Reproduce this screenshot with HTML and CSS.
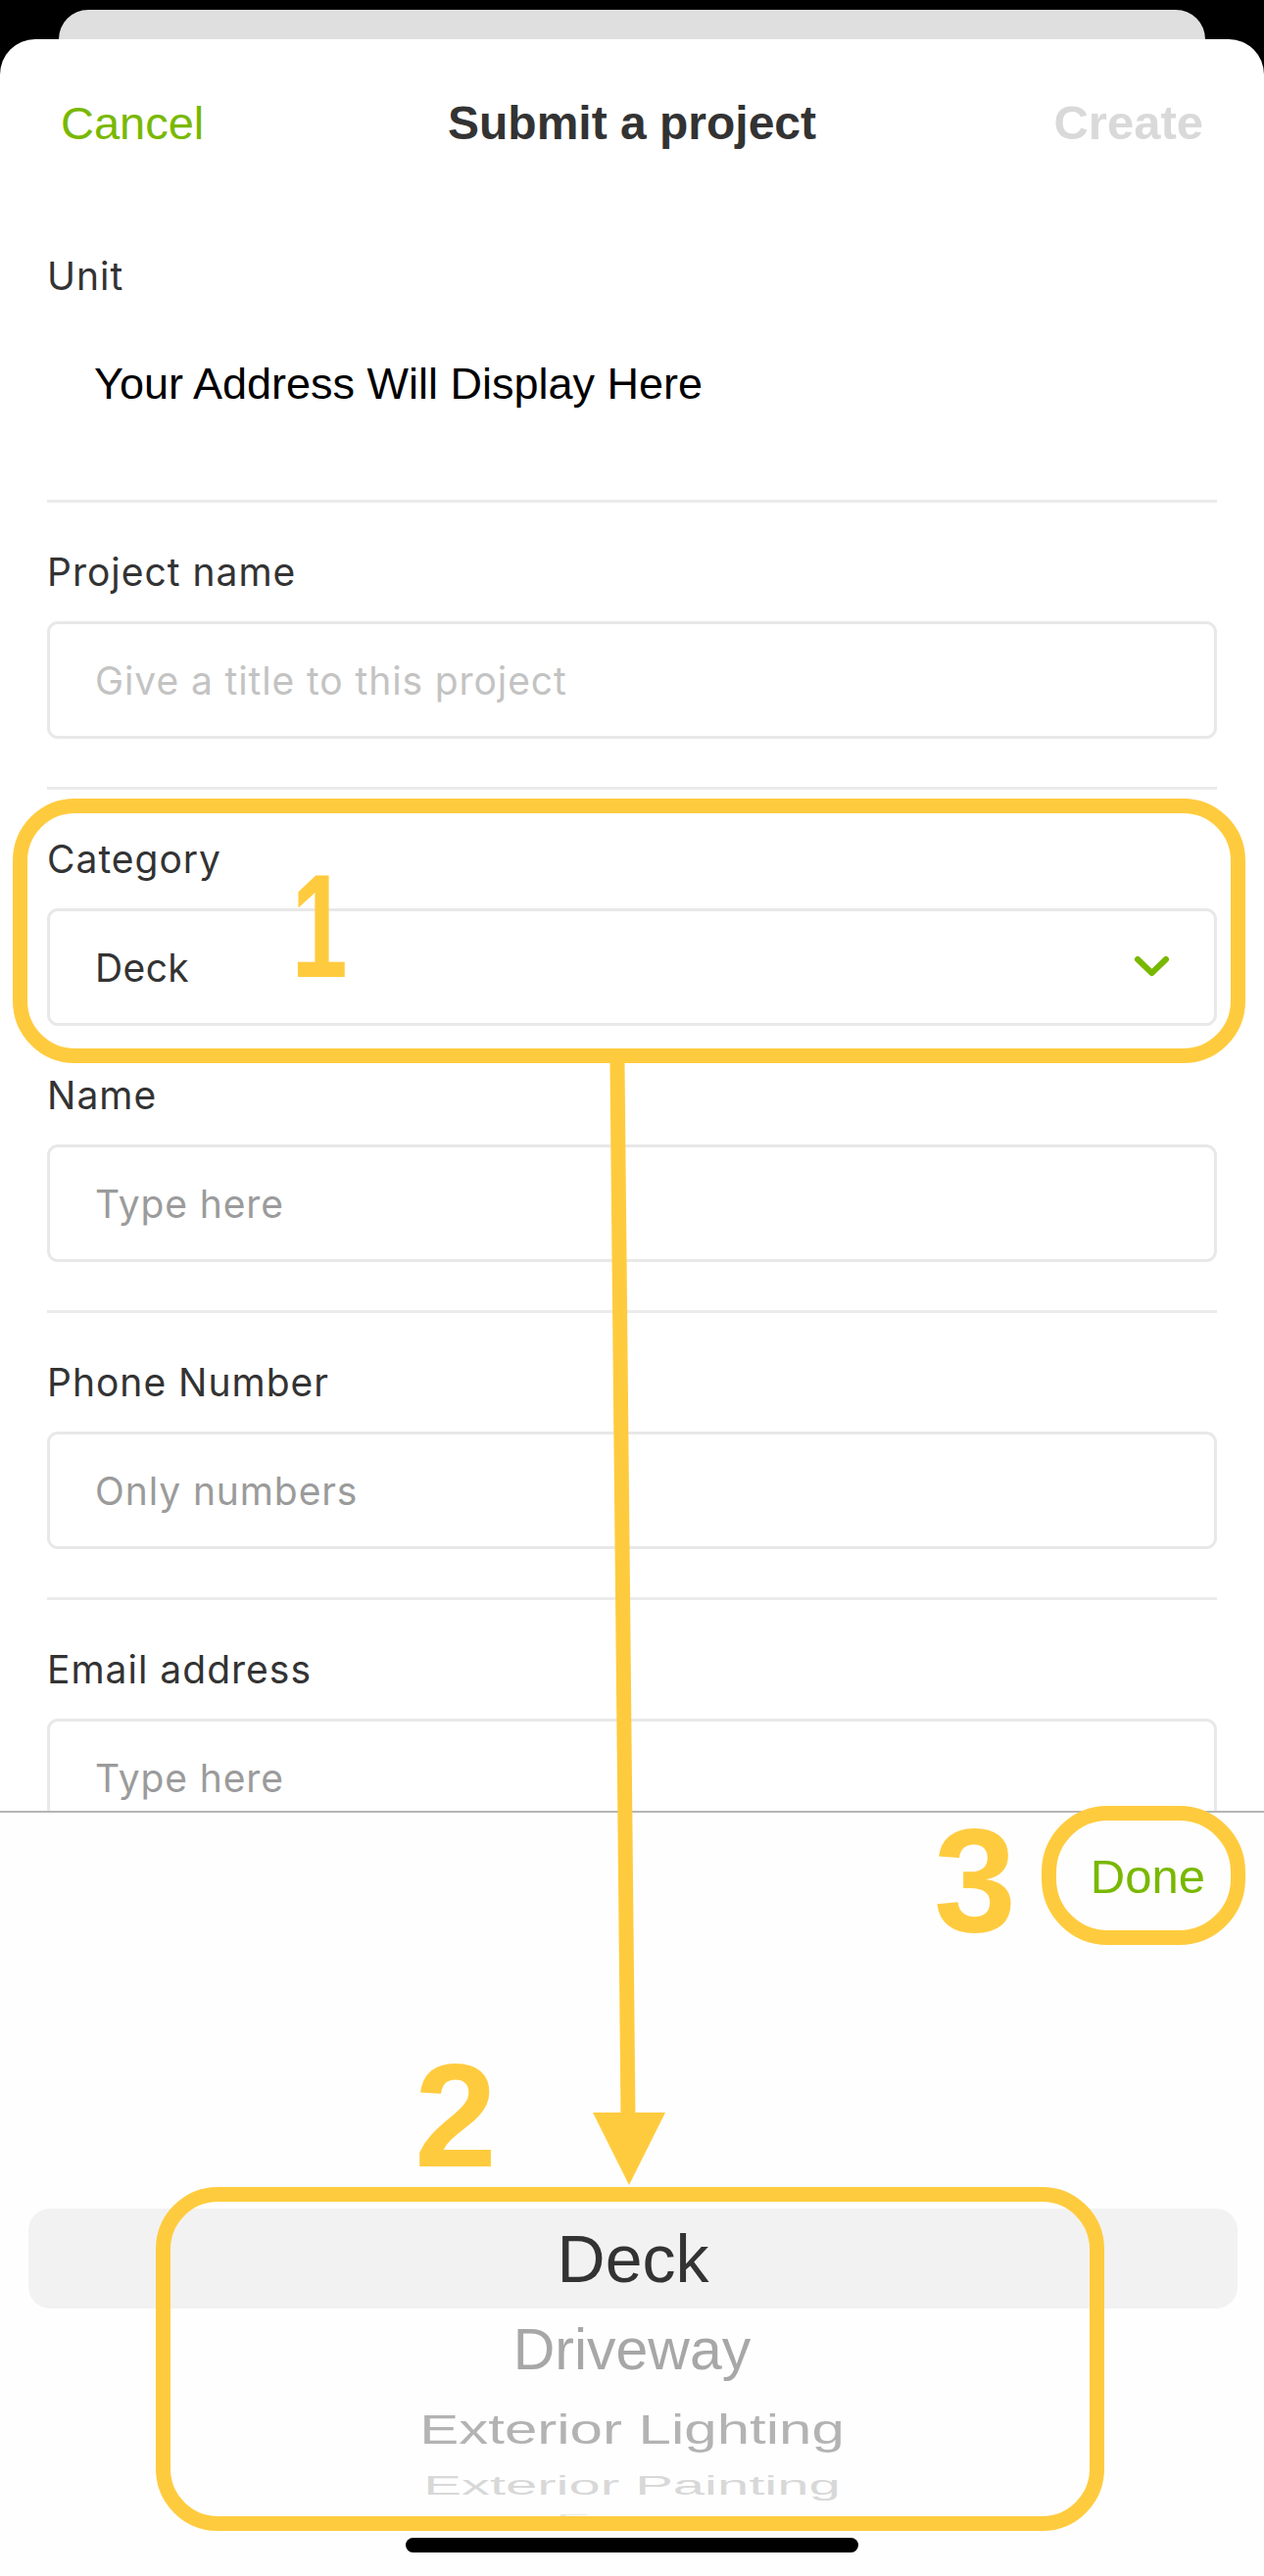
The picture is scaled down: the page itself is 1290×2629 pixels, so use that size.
FILE: index.html
```html
<!DOCTYPE html>
<html lang="en">
<head>
<meta charset="utf-8">
<title>Submit a project</title>
<link rel="stylesheet" href="styles.css">
</head>
<body>
<div class="device">
  <div class="backcard"></div>
  <div class="sheet">
    <header class="nav">
      <span class="nav-cancel">Cancel</span>
      <span class="nav-title">Submit a project</span>
      <span class="nav-create">Create</span>
    </header>

    <main class="form">
      <section class="field field-unit">
        <div class="label">Unit</div>
        <div class="address">Your Address Will Display Here</div>
      </section>
      <hr class="divider">

      <section class="field">
        <div class="label">Project name</div>
        <div class="input"><span class="ph ph-light">Give a title to this project</span></div>
      </section>
      <hr class="divider">

      <section class="field field-open">
        <div class="label">Category</div>
        <div class="input select">
          <span class="value">Deck</span>
          <svg class="chev" width="42" height="28" viewBox="0 0 42 28" aria-hidden="true">
            <polyline points="6,6 20.5,20 35,6" fill="none" stroke="#79b800" stroke-width="6" stroke-linecap="round" stroke-linejoin="round"/>
          </svg>
        </div>
      </section>

      <section class="field">
        <div class="label">Name</div>
        <div class="input"><span class="ph">Type here</span></div>
      </section>
      <hr class="divider">

      <section class="field">
        <div class="label">Phone Number</div>
        <div class="input"><span class="ph">Only numbers</span></div>
      </section>
      <hr class="divider">

      <section class="field">
        <div class="label">Email address</div>
        <div class="input"><span class="ph">Type here</span></div>
      </section>
    </main>

    <div class="picker">
      <div class="toolbar"><span class="done">Done</span></div>
      <div class="wheel">
        <div class="row row-sel"><span>Deck</span></div>
        <div class="row row-1"><span>Driveway</span></div>
        <div class="row row-2"><span>Exterior Lighting</span></div>
        <div class="row row-3"><span>Exterior Painting</span></div>
        <div class="row row-4"><span>Fence</span></div>
      </div>
      <div class="home"></div>
    </div>
  </div>

  <svg class="annot" width="1290" height="2629" viewBox="0 0 1290 2629" aria-hidden="true">
    <rect x="20.5" y="822.5" width="1243" height="255" rx="56" ry="56" fill="none" stroke="#ffcb3e" stroke-width="15"/>
    <rect x="1070.5" y="1850.5" width="193" height="127" rx="60" ry="60" fill="none" stroke="#ffcb3e" stroke-width="15"/>
    <rect x="166.5" y="2239.5" width="953" height="336" rx="56" ry="56" fill="none" stroke="#ffcb3e" stroke-width="15"/>
    <line x1="630" y1="1085" x2="641" y2="2160" stroke="#ffcb3e" stroke-width="15"/>
    <polygon points="605,2156 679,2156 642,2230" fill="#ffcb3e"/>
  </svg>
  <div class="step step-1">1</div>
  <div class="step step-2">2</div>
  <div class="step step-3">3</div>
</div>
</body>
</html>
```

FILE: styles.css
```css
* { box-sizing: border-box; }

html, body {
  margin: 0;
  padding: 0;
  background: #000;
}

.device {
  position: relative;
  width: 1290px;
  height: 2629px;
  overflow: hidden;
  background: #000;
  display: flex;
  flex-direction: column;
}

.backcard {
  flex: none;
  height: 60px;
  margin: 10px 60px -30px;
  background: #dfdfdf;
  border-radius: 30px 30px 0 0;
}

.sheet {
  position: relative;
  flex: 1;
  min-height: 0;
  background: #fff;
  border-radius: 36px 36px 0 0;
  display: flex;
  flex-direction: column;
}

/* ---------- nav ---------- */
.nav {
  flex: none;
  height: 170px;
  padding: 0 62px;
  display: grid;
  grid-template-columns: 1fr auto 1fr;
  align-items: center;
  font-family: "Liberation Sans", Arial, sans-serif;
  font-size: 47px;
}
.nav-cancel { color: #79b800; justify-self: start; }
.nav-title { color: #333; font-weight: bold; font-size: 48px; }
.nav-create { color: #d9d9d9; font-weight: bold; font-size: 49px; justify-self: end; }

/* ---------- form ---------- */
.form {
  flex: 1;
  min-height: 0;
  overflow: hidden;
  padding: 0 48px;
}

.field {
  padding: 47px 0 49px;
}
.field-unit {
  padding: 48px 0 92px;
}
.field-open {
  padding-bottom: 0;
}

.label {
  font-family: Inter, "Noto Sans", sans-serif;
  font-size: 39px;
  letter-spacing: 1px;
  line-height: 48px;
  color: #333;
}

.address {
  margin-top: 60px;
  padding-left: 48px;
  font-family: "Liberation Sans", Arial, sans-serif;
  font-size: 45px;
  line-height: 52px;
  color: #000;
}

.divider {
  margin: 0;
  border: none;
  height: 3px;
  background: #ebebeb;
}

.input {
  margin-top: 26px;
  height: 120px;
  border: 3px solid #e8e8e8;
  border-radius: 11px;
  padding: 0 42px 0 46px;
  display: flex;
  align-items: center;
  justify-content: space-between;
  font-family: Inter, "Noto Sans", sans-serif;
  font-size: 39px;
  letter-spacing: 0.9px;
}
.ph { color: #9b9b9b; }
.ph-light { color: #c3c3c3; }
.value { color: #333; letter-spacing: 0.4px; }
.chev { display: block; flex: none; }

/* ---------- picker ---------- */
.picker {
  flex: none;
  height: 781px;
  border-top: 2px solid #b5b5b5;
  background: #fefefe;
  display: flex;
  flex-direction: column;
}

.toolbar {
  flex: none;
  height: 130px;
  display: flex;
  justify-content: flex-end;
  align-items: center;
  padding-right: 60px;
}
.done {
  font-family: "Liberation Sans", Arial, sans-serif;
  font-size: 49px;
  color: #79b800;
}

.wheel {
  margin-top: 274px;
  display: flex;
  flex-direction: column;
  font-family: "Liberation Sans", Arial, sans-serif;
}
.row {
  display: flex;
  align-items: center;
  justify-content: center;
}
.row span {
  display: inline-block;
  line-height: 1;
}
.row-sel {
  height: 102px;
  margin: 0 27px 0 29px;
  background: #f2f2f2;
  border-radius: 22px;
  font-size: 68px;
  color: #333;
}
.row-1 { height: 84px; font-size: 59px; color: #a7a7a7; }
.row-2 { height: 80px; font-size: 60px; color: #b3b3b3; }
.row-2 span { transform: scaleY(0.72); }
.row-3 { height: 34px; font-size: 58px; color: #d8d8d8; }
.row-3 span { transform: scaleY(0.47); }
.row-4 { height: 32px; font-size: 56px; color: #e6e6e6; }
.row-4 span { transform: scaleY(0.2); }

.home {
  flex: none;
  width: 462px;
  height: 15px;
  margin: 4px auto 0;
  background: #000;
  border-radius: 8px;
}

/* ---------- annotations (overlay) ---------- */
.annot {
  position: absolute;
  left: 0;
  top: 0;
  pointer-events: none;
}
.step {
  position: absolute;
  font-family: "Liberation Sans", Arial, sans-serif;
  font-weight: bold;
  font-size: 151px;
  line-height: 151px;
  color: #ffcb3e;
}
.step-1 { left: 284px; top: 869px; transform: scaleX(0.68); }
.step-2 { left: 423px; top: 2083px; }
.step-3 { left: 953px; top: 1843px; }
```
